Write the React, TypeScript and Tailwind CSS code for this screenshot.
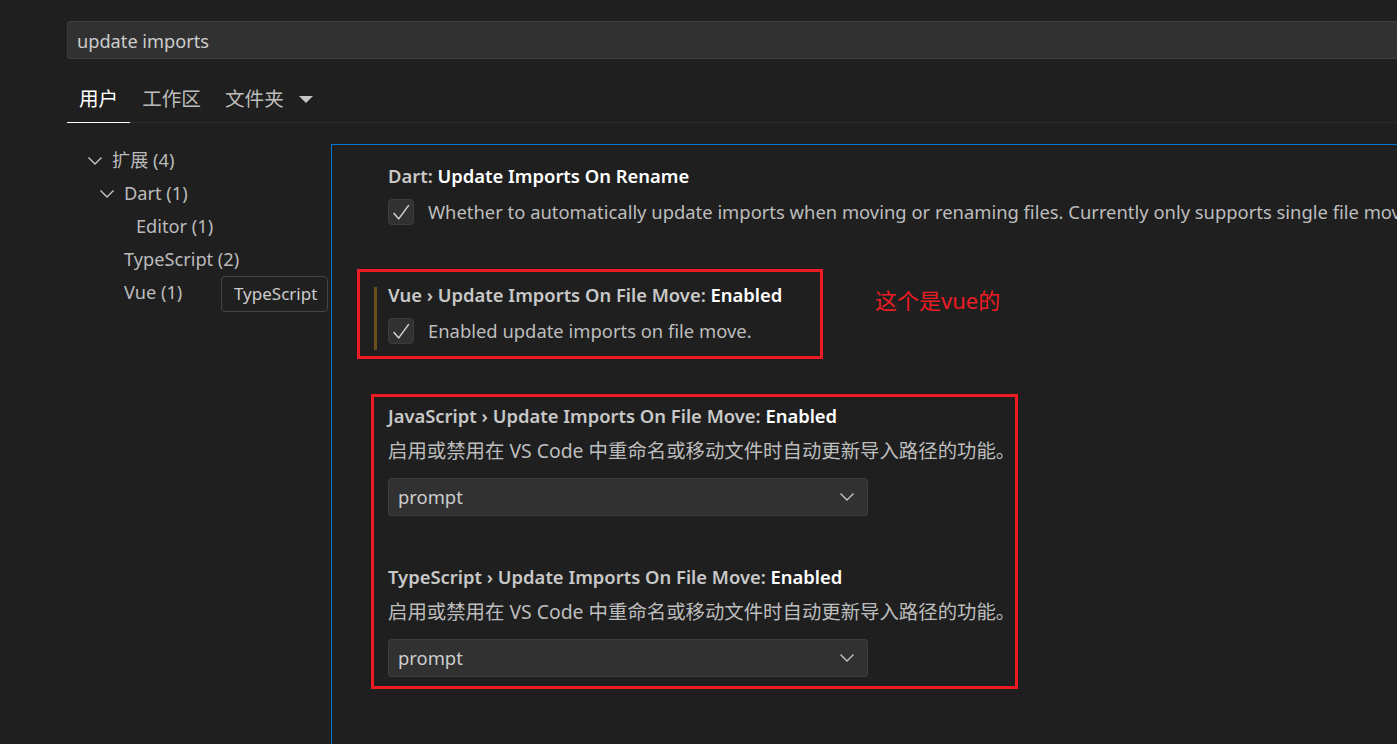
import React from 'react';

const Chevron: React.FC<{ className?: string }> = ({ className }) => (
  <svg width="16" height="10" viewBox="0 0 16 10" className={className} fill="none">
    <path d="M1.5 1.5 L8 8 L14.5 1.5" stroke="#c5c5c5" strokeWidth="1.4" />
  </svg>
);

const Checkbox: React.FC = () => (
  <div className="w-[26px] h-[26px] shrink-0 rounded-[4px] bg-[#313131] border border-[#3c3c3c] flex items-center justify-center">
    <svg width="26" height="26" viewBox="0 0 26 26" fill="none">
      <path d="M5 14 L10.5 20.5 L21.5 5.5" stroke="#d4d4d4" strokeWidth="1.6" />
    </svg>
  </div>
);

const Select: React.FC<{ value: string }> = ({ value }) => (
  <div className="w-[480px] h-[38px] rounded-[3px] bg-[#313131] border border-[#3c3c3c] flex items-center justify-between pl-[9px] pr-[12px]">
    <span className="text-[18.4px] text-[#cccccc]">{value}</span>
    <Chevron />
  </div>
);

const tree = [
  { label: '扩展 (4)', level: 1, open: true },
  { label: 'Dart (1)', level: 2, open: true },
  { label: 'Editor (1)', level: 3 },
  { label: 'TypeScript (2)', level: 2 },
  { label: 'Vue (1)', level: 2 },
];

const App: React.FC = () => {
  return (
    <div className="w-[1397px] h-[744px] overflow-hidden bg-[#1f1f1f] flex flex-col font-['Noto_Sans','Noto_Sans_CJK_SC',sans-serif]">
      {/* search */}
      <div className="mt-[21px] ml-[67px] w-[1360px] h-[38px] shrink-0 bg-[#313131] border border-[#3c3c3c] rounded-[3px] flex items-center pl-[9px] pt-[3px]">
        <span className="text-[18.2px] text-[#cccccc]">update imports</span>
      </div>

      {/* tabs */}
      <div className="mt-[16px] ml-[67px] flex items-stretch h-[48px] shrink-0 border-b border-[#2b2b2b]">
        <div className="px-[12px] flex items-center text-[19.6px] text-white border-b border-white -mb-px">用户</div>
        <div className="px-[12px] flex items-center text-[19.6px] text-[#bdbdbd]">工作区</div>
        <div className="px-[12px] flex items-center text-[19.6px] text-[#bdbdbd]">
          文件夹
          <svg width="14" height="8" viewBox="0 0 14 8" className="ml-[15px] mt-[2px]">
            <path d="M0 0 L14 0 L7 7 Z" fill="#c5c5c5" />
          </svg>
        </div>
      </div>

      {/* body */}
      <div className="mt-[21px] flex flex-1 min-h-0">
        {/* tree */}
        <div className="relative w-[331px] shrink-0">
          {tree.map((t) => (
            <div
              key={t.label}
              className={`h-[33px] flex items-center text-[18.2px] text-[#bbbbbb] ${
                t.level === 1 ? 'pl-[87px]' : t.level === 2 ? 'pl-[99px]' : 'pl-[111px]'
              }`}
            >
              <div className="w-[25px] shrink-0 flex items-center">{t.open && <Chevron />}</div>
              <span>{t.label}</span>
            </div>
          ))}
          <div className="absolute left-[221px] top-[132px] w-[107px] h-[36px] rounded-[4px] border border-[#454545] bg-[#202020] flex items-center pl-[12px] text-[17px] text-[#cccccc]">
            TypeScript
          </div>
        </div>

        {/* settings list */}
        <div className="flex-1 border-l border-t border-[#0078d4] pt-[18px]">
          {/* Dart */}
          <div className="pl-[56px]">
            <div className="h-[26px] flex items-center text-[18.4px] font-semibold whitespace-nowrap">
              <span className="text-[#c8c8c8]">Dart:&nbsp;</span>
              <span className="text-white">Update Imports On Rename</span>
            </div>
            <div className="mt-[10px] h-[26px] flex items-center gap-[14px] whitespace-nowrap">
              <Checkbox />
              <span className="text-[18.4px] text-[#bdbdbd]">
                Whether to automatically update imports when moving or renaming files. Currently only supports single file moves.
              </span>
            </div>
          </div>

          {/* Vue */}
          <div className="mt-[44px] flex items-start">
            <div className="ml-[25px] w-[466px] h-[90px] border-[3px] border-[#ed1c24] flex">
              <div className="ml-[14px] mt-[15px] w-[3px] h-[63px] bg-[#6a4f1c]" />
              <div className="ml-[11px] pt-[10px]">
                <div className="h-[26px] flex items-center text-[18.4px] font-semibold whitespace-nowrap">
                  <span className="text-[#c8c8c8]">Vue › Update Imports On File Move:&nbsp;</span>
                  <span className="text-white">Enabled</span>
                </div>
                <div className="mt-[10px] h-[26px] flex items-center gap-[14px] whitespace-nowrap">
                  <Checkbox />
                  <span className="text-[18.4px] text-[#bdbdbd]">Enabled update imports on file move.</span>
                </div>
              </div>
            </div>
            <div className="ml-[52px] mt-[16px] h-[30px] flex items-center text-[22px] text-[#ed1c24]">这个是vue的</div>
          </div>

          {/* JavaScript / TypeScript */}
          <div className="mt-[35px] ml-[39px] w-[647px] h-[295px] border-[3px] border-[#ed1c24] pl-[14px] pt-[6px]">
            {['JavaScript', 'TypeScript'].map((lang, i) => (
              <div key={lang} className={i === 1 ? 'mt-[48px]' : ''}>
                <div className="h-[26px] flex items-center text-[18.4px] font-semibold whitespace-nowrap">
                  <span className="text-[#c8c8c8]">{lang} › Update Imports On File Move:&nbsp;</span>
                  <span className="text-white">Enabled</span>
                </div>
                <div className="mt-[8px] h-[28px] flex items-center text-[19.4px] text-[#bdbdbd] whitespace-nowrap">
                  启用或禁用在 VS Code 中重命名或移动文件时自动更新导入路径的功能。
                </div>
                <div className="mt-[13px]">
                  <Select value="prompt" />
                </div>
              </div>
            ))}
          </div>
        </div>
      </div>
    </div>
  );
};

export default App;
